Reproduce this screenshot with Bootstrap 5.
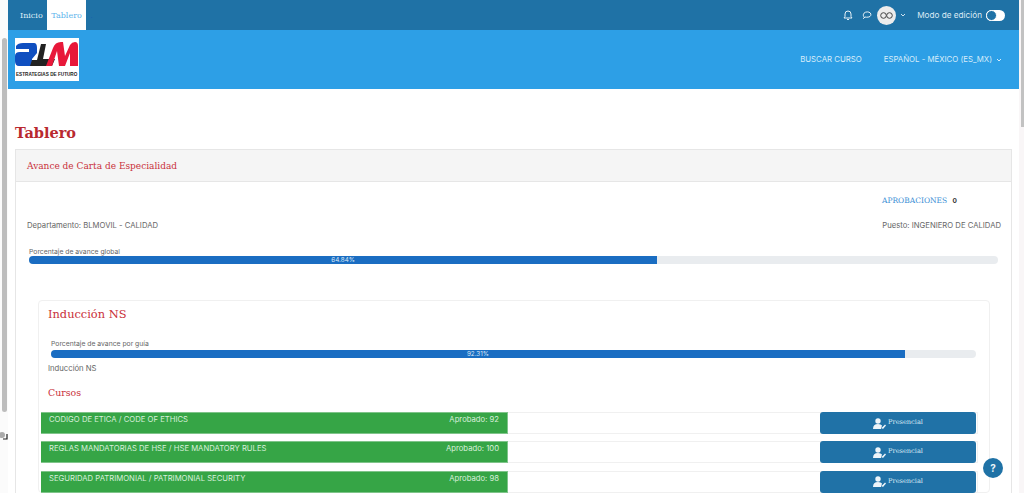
<!DOCTYPE html>
<html lang="es">
<head>
<meta charset="utf-8">
<title>Tablero</title>
<link href="https://cdn.jsdelivr.net/npm/bootstrap@5.3.0/dist/css/bootstrap.min.css" rel="stylesheet">
<style>
html,body{height:493px;overflow:hidden;background:#fff}
body{font-family:Inter,"Liberation Sans",sans-serif;font-size:7.7px;color:#666;position:relative}
.serif-f{font-family:"DejaVu Serif","Liberation Serif",serif}
.red-t{color:#c9303a}
.shell{height:493px}
.strip-l{width:8px;flex:none;background:#fbfbfb;position:relative}
.strip-l .thumb{width:5px;height:374px;margin:38px 0 0 2px;background:#bdbdbd;border-radius:3px}
.strip-l .mark-x{position:absolute;left:0;top:431px;display:block}
.strip-r{width:5px;flex:none;background:#f9f6f7}
.strip-r .thumb{width:3px;height:127px;background:#c2c2c2}
.mainp{width:1011px;flex:none}
.topbar{height:30px;background:#1f72a6;padding-left:7px;padding-right:14px}
.toplink{height:30px;padding:0 4px 0 5px;line-height:32px;font-size:8px;color:#dfeef7;display:block;text-decoration:none}
.toplink.active-t{background:#fff;color:#5cb4ec;padding:0 4.500px}
.toplink.dot-t{color:#1a5fb0;padding:0 4px}
.brandbar{height:59px;background:#2d9fe6;padding:8px 0 0 7px}
.whiteline{height:1px}
.logo-box{width:64px;height:43px;background:#fff;display:block}
.brand-links{color:#d6ecfa;font-size:7.800px;padding-right:17px;padding-bottom:8px;gap:22px}
.pagehead{font-size:14.500px;font-weight:700;color:#b9292f;margin:34px 0 0 7px;line-height:18px;height:25px}
.maincard{margin:0 7px;border:1px solid #e6e6e6;border-bottom:0;height:344px}
.mainhead{height:32px;background:#f5f5f5;border-bottom:1px solid #e6e6e6;padding-left:11px;line-height:33px;font-size:9px}
.aprob{padding:13px 54px 0 0;font-size:7.500px;color:#3d8fd6;line-height:12px}
.aprob b{font-family:Inter,sans-serif;font-size:6.500px;color:#333;margin-left:3px}
.deptrow{padding:0 10px 0 11px;margin-top:13px;line-height:12px}
.prog-lab{font-size:6.800px;line-height:9px}
.prog-o{height:8px;background:#e9ecef;border-radius:4px;overflow:hidden}
.prog-i{height:8px;background:#1a6dc2;color:#dce9f6;font-size:6.300px;line-height:8.500px;text-align:center}
.glob{margin:15px 13px 0 13px}
.subcard{margin:36px 21px 0 22px;border:1px solid #f0f0f0;border-radius:4px;height:193px;padding-left:2px}
.subtitle{font-size:11.400px;padding:5px 0 0 7px;line-height:16px;height:38px}
.subprog{margin:0 13px 0 10px}
.subprog .prog-lab{margin-bottom:2px}
.guide-n{padding:5px 0 0 7px;line-height:12px}
.cursos{font-size:9.400px;padding:11px 0 0 7px;line-height:14px;height:37px}
.courserow{height:22px;margin:0 11px 7.400px 0;border:1px solid #f0f0f0;border-left:0}
.courserow:last-child{margin-bottom:0}
.green-b{width:467px;height:22px;background:#36a546;color:#d9f0dc;padding:0 8px;margin-top:-1px;line-height:14px;border:1px solid #7fc48a;border-width:1px 1px 1px 0}
.pres-b{width:156px;height:22px;margin:-1px 1px 0 0;background:#2072a7;color:#dcecf6;border-radius:3px;font-size:6.600px;gap:2px}
.helpbtn{position:absolute;left:983px;top:458px;width:20px;height:20px;border-radius:50%;background:#1f72a6;color:#eaf3f9;font-size:10px;font-weight:700;line-height:20px;text-align:center}
.avatar-c{width:19px;height:19px;border-radius:50%;background:#ececec;margin-left:5px}
.edit-t{color:#dcebf5;font-size:8.200px;margin-left:11px}
.chat-i{margin-left:9px}
.switch-t{width:19px;height:11px;border-radius:6px;background:#fff;position:relative;display:block}
.switch-t::before{content:"";position:absolute;left:0;top:0;width:11px;height:11px;border-radius:50%;background:#1f72a6;border:1.500px solid #fff}
</style>
</head>
<body>
<div class="shell d-flex">
  <div class="strip-l"><div class="thumb"></div>
    <svg class="mark-x" width="8" height="10" viewBox="0 0 8 10"><circle cx="2" cy="4" r="3" fill="#aaa"/><path d="M7 3v5H3" fill="none" stroke="#222" stroke-width="1.200"/></svg>
  </div>
  <div class="mainp">
    <nav class="topbar d-flex align-items-center justify-content-between">
      <div class="d-flex serif-f">
        <a class="toplink" href="#">Inicio</a>
        <a class="toplink active-t" href="#">Tablero</a>
        <a class="toplink dot-t" href="#">.</a>
      </div>
      <div class="d-flex align-items-center">
        <svg width="10" height="11" viewBox="0 0 10 11" fill="none" stroke="#e8f2f8" stroke-width="1"><path d="M1 8h8L8 6.500V4a3 3 0 0 0-6 0v2.500zM4 9.500h2"/></svg>
        <svg class="chat-i" width="10" height="10" viewBox="0 0 10 10" fill="none" stroke="#e8f2f8" stroke-width="1"><path d="M2.500 7.500C1 6 1 4.500 2 3.200 3.500 1.500 7 1.500 8.300 3 9.500 4.500 8.800 6.500 6.800 7c-1.500.4-3 .2-3.800 0L1.300 8.500z"/></svg>
        <span class="avatar-c d-flex align-items-center justify-content-center">
          <svg width="13" height="7" viewBox="0 0 13 7" fill="none" stroke="#444" stroke-width="1"><circle cx="3.500" cy="3.500" r="2.800"/><circle cx="9.500" cy="3.500" r="2.800"/></svg>
        </span>
        <svg class="ms-1" width="6" height="4" viewBox="0 0 6 4" fill="none" stroke="#cfe3f0" stroke-width="1"><path d="M1 1l2 2 2-2"/></svg>
        <span class="edit-t">Modo de edición</span>
        <span class="switch-t ms-1"></span>
      </div>
    </nav>
    <header class="brandbar d-flex justify-content-between align-items-center">
      <div class="logo-box align-self-start">
        <svg width="64" height="43" viewBox="0 0 64 43">
          <path d="M1 8Q3 5 8 5H19Q22 5 22 10V15L17 21V28H4Q0 28 0 23V18Q0 14 5 14H14V11H1Z" fill="#0f4fc0"/>
          <path d="M17 22H22L26 6H31L28 21H40L37 28H15Z" fill="#222"/>
          <path d="M31 28L38 10Q40 4 46 4H48L50 18L55 7Q57 4 60 4Q63 4 63 8V28H55V15L50 28H44L42 13L37 28Z" fill="#e8183a"/>
          <text transform="translate(1 38) scale(.85 1)" font-family="Liberation Sans" font-size="5.500" font-weight="700" fill="#222">ESTRATEGIAS DE FUTURO</text>
        </svg>
      </div>
      <div class="brand-links d-flex align-items-center">
        <span>BUSCAR CURSO</span>
        <span class="d-flex align-items-center gap-1">ESPAÑOL - MÉXICO (ES_MX)
          <svg width="6" height="4" viewBox="0 0 6 4" fill="none" stroke="#d6ecfa" stroke-width="1"><path d="M1 1l2 2 2-2"/></svg>
        </span>
      </div>
    </header>
    <div class="whiteline"></div>
    <h1 class="pagehead serif-f">Tablero</h1>
    <section class="maincard">
      <div class="mainhead serif-f red-t">Avance de Carta de Especialidad</div>
      <div class="aprob serif-f text-end">APROBACIONES <b>0</b></div>
      <div class="deptrow d-flex justify-content-between">
        <span>Departamento: BLMOVIL - CALIDAD</span>
        <span>Puesto: INGENIERO DE CALIDAD</span>
      </div>
      <div class="glob">
        <div class="prog-lab">Porcentaje de avance global</div>
        <div class="prog-o"><div class="prog-i" style="width:64.84%">64.84%</div></div>
      </div>
      <div class="subcard">
        <div class="subtitle serif-f red-t">Inducción NS</div>
        <div class="subprog">
          <div class="prog-lab">Porcentaje de avance por guía</div>
          <div class="prog-o"><div class="prog-i" style="width:92.31%">92.31%</div></div>
        </div>
        <div class="guide-n">Inducción NS</div>
        <div class="cursos serif-f red-t">Cursos</div>
        <div class="courserow d-flex justify-content-between">
          <div class="green-b d-flex justify-content-between"><span>CODIGO DE ETICA / CODE OF ETHICS</span><span>Aprobado: 92</span></div>
          <div class="pres-b d-flex align-items-center justify-content-center serif-f"><svg width="13" height="11" viewBox="0 0 13 11" fill="#eef5fa"><circle cx="5" cy="3" r="2.700"/><path d="M0 11q0-5 5-5 3 0 4 1.500L8 11zM8.500 10l3.500-3.500 1 1L10 11z"/></svg>Presencial</div>
        </div>
        <div class="courserow d-flex justify-content-between">
          <div class="green-b d-flex justify-content-between"><span>REGLAS MANDATORIAS DE HSE / HSE MANDATORY RULES</span><span>Aprobado: 100</span></div>
          <div class="pres-b d-flex align-items-center justify-content-center serif-f"><svg width="13" height="11" viewBox="0 0 13 11" fill="#eef5fa"><circle cx="5" cy="3" r="2.700"/><path d="M0 11q0-5 5-5 3 0 4 1.500L8 11zM8.500 10l3.500-3.500 1 1L10 11z"/></svg>Presencial</div>
        </div>
        <div class="courserow d-flex justify-content-between">
          <div class="green-b d-flex justify-content-between"><span>SEGURIDAD PATRIMONIAL / PATRIMONIAL SECURITY</span><span>Aprobado: 98</span></div>
          <div class="pres-b d-flex align-items-center justify-content-center serif-f"><svg width="13" height="11" viewBox="0 0 13 11" fill="#eef5fa"><circle cx="5" cy="3" r="2.700"/><path d="M0 11q0-5 5-5 3 0 4 1.500L8 11zM8.500 10l3.500-3.500 1 1L10 11z"/></svg>Presencial</div>
        </div>
      </div>
    </section>
  </div>
  <div class="strip-r"><div class="thumb ms-auto"></div></div>
</div>
<div class="helpbtn">?</div>
<script src="https://cdn.jsdelivr.net/npm/bootstrap@5.3.0/dist/js/bootstrap.bundle.min.js"></script>
</body>
</html>
